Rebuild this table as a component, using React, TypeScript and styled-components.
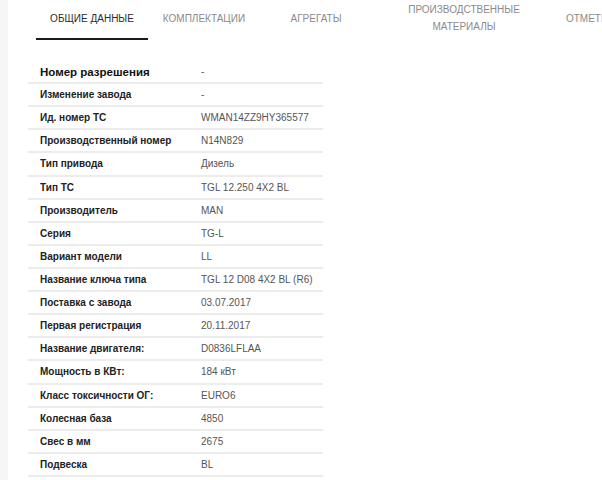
import React from "react";
import styled, { createGlobalStyle } from "styled-components";

const Global = createGlobalStyle`
  html, body { margin: 0; padding: 0; background: #ffffff; }
  body { font-family: "Liberation Sans", Arial, sans-serif; }
`;

const Page = styled.div`
  display: flex;
  width: 602px;
  height: 480px;
  overflow: hidden;
`;

const Strip = styled.div`
  width: 8px;
  flex: none;
  background: #f6f6f6;
`;

const Main = styled.div`
  flex: 1;
  display: flex;
  flex-direction: column;
  padding-left: 28px;
  overflow: hidden;
`;

const TabBar = styled.div`
  display: flex;
  height: 40px;
  white-space: nowrap;
`;

const Tab = styled.div<{ $w: number; $active?: boolean }>`
  flex: none;
  width: ${(p) => p.$w}px;
  box-sizing: border-box;
  height: 40px;
  display: flex;
  align-items: center;
  justify-content: center;
  text-align: center;
  font-size: 10px;
  line-height: 17px;
  padding-bottom: 2px;
  color: ${(p) => (p.$active ? "#2b2b2b" : "#8a8a8a")};
  border-bottom: 2px solid ${(p) => (p.$active ? "#1a1a1a" : "transparent")};
`;

const Table = styled.div`
  margin-top: 21px;
  width: 295px;
  margin-left: -8px;
`;

const Row = styled.div`
  display: flex;
  align-items: center;
  height: 23.12px;
  box-sizing: border-box;
  padding-left: 12px;
  border-bottom: 2px solid #ececec;
`;

const Label = styled.div<{ $big?: boolean }>`
  width: 161px;
  flex: none;
  font-weight: bold;
  font-size: ${(p) => (p.$big ? "11.5px" : "10px")};
  color: ${(p) => (p.$big ? "#111" : "#222")};
`;

const Value = styled.div`
  font-size: 10px;
  color: #555;
`;

const rows: [string, string][] = [
  ["Номер разрешения", "-"],
  ["Изменение завода", "-"],
  ["Ид. номер ТС", "WMAN14ZZ9HY365577"],
  ["Производственный номер", "N14N829"],
  ["Тип привода", "Дизель"],
  ["Тип ТС", "TGL 12.250 4X2 BL"],
  ["Производитель", "MAN"],
  ["Серия", "TG-L"],
  ["Вариант модели", "LL"],
  ["Название ключа типа", "TGL 12 D08 4X2 BL (R6)"],
  ["Поставка с завода", "03.07.2017"],
  ["Первая регистрация", "20.11.2017"],
  ["Название двигателя:", "D0836LFLAA"],
  ["Мощность в КВт:", "184 кВт"],
  ["Класс токсичности ОГ:", "EURO6"],
  ["Колесная база", "4850"],
  ["Свес в мм", "2675"],
  ["Подвеска", "BL"],
];

export default function App() {
  return (
    <>
      <Global />
      <Page>
        <Strip />
        <Main>
          <TabBar>
            <Tab $w={112} $active>ОБЩИЕ ДАННЫЕ</Tab>
            <Tab $w={112}>КОМПЛЕКТАЦИИ</Tab>
            <Tab $w={112}>АГРЕГАТЫ</Tab>
            <Tab $w={184}>
              ПРОИЗВОДСТВЕННЫЕ
              <br />
              МАТЕРИАЛЫ
            </Tab>
            <Tab $w={68}>ОТМЕТКИ</Tab>
          </TabBar>
          <Table>
            {rows.map(([l, v], i) => (
              <Row key={l}>
                <Label $big={i === 0}>{l}</Label>
                <Value>{v}</Value>
              </Row>
            ))}
          </Table>
        </Main>
      </Page>
    </>
  );
}
